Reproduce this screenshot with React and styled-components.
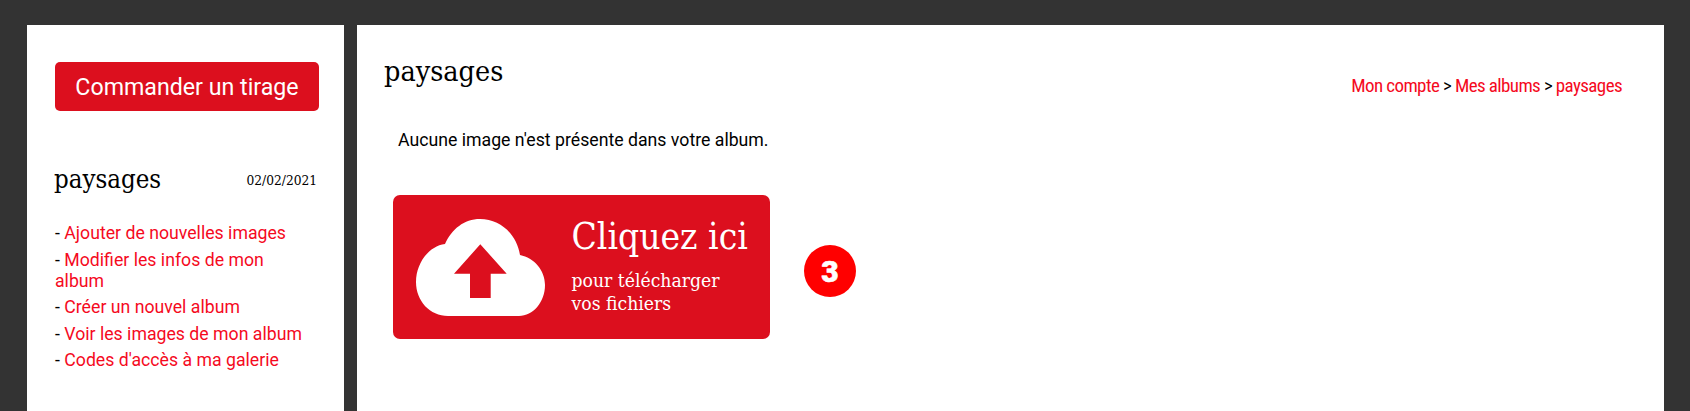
import React from 'react'
import styled, { createGlobalStyle } from 'styled-components'

const RED = '#dc0f1e'
const LINK = '#f50a1e'
const SLAB = '"DejaVu Serif Condensed", "DejaVu Serif", serif'

const Global = createGlobalStyle`
  html, body { margin: 0; height: 411px; overflow: hidden; background: #333; }
  body { font-family: Roboto, sans-serif; color: #000; }
`

const Page = styled.div`
  display: flex;
  gap: 13px;
  height: 411px;
  padding: 25px 26px 0 27px;
  box-sizing: border-box;
`

const Sidebar = styled.aside`
  width: 317px;
  flex: none;
  background: #fff;
  padding: 37px 25px 0 28px;
  box-sizing: border-box;
`

const Main = styled.main`
  flex: 1;
  background: #fff;
  padding: 31px 42px 0 27px;
`

const OrderButton = styled.a`
  display: flex;
  align-items: center;
  justify-content: center;
  height: 49px;
  background: ${RED};
  border-radius: 5px;
  color: #fff;
  font-size: 23.2px;
`

const AlbumHead = styled.div`
  display: flex;
  justify-content: space-between;
  align-items: center;
  margin-top: 51px;
  padding-right: 2px;
`

const AlbumTitle = styled.h2`
  margin: 0 0 0 -1px;
  font: 400 25.6px/34px ${SLAB};
`

const AlbumDate = styled.span`
  margin-top: 2px;
  font: 400 13.6px/20px ${SLAB};
`

const Menu = styled.ul`
  list-style: none;
  margin: 27px 8px 0 0;
  padding: 0;
  font-size: 17.7px;
  line-height: 21px;
`

const MenuItem = styled.li`
  margin-bottom: 5.5px;
  a { color: ${LINK}; }
`

const Head = styled.div`
  display: flex;
  justify-content: space-between;
`

const PageTitle = styled.h1`
  margin: 0;
  font: 400 28.5px/32px ${SLAB};
`

const Crumbs = styled.div`
  margin-top: 19px;
  font-size: 19px;
  line-height: 22px;
  font-stretch: 75%;
  letter-spacing: -0.6px;
  a { color: ${LINK}; }
`

const Notice = styled.p`
  margin: 31px 0 0 14px;
  font-size: 17.7px;
  line-height: 24px;
`

const UploadRow = styled.div`
  display: flex;
  align-items: center;
  gap: 34px;
  margin: 43px 0 0 9px;
`

const UploadCard = styled.a`
  display: flex;
  align-items: center;
  width: 377px;
  height: 144px;
  padding-left: 23px;
  box-sizing: border-box;
  background: ${RED};
  border-radius: 7px;
  color: #fff;
`

const UploadText = styled.div`
  margin-left: 26.5px;
  padding-bottom: 3px;
`

const UploadTitle = styled.div`
  font: 400 36.8px/42px ${SLAB};
`

const UploadSub = styled.div`
  margin-top: 11px;
  font: 400 19.2px/23px ${SLAB};
`

const StepBadge = styled.div`
  display: flex;
  align-items: center;
  justify-content: center;
  width: 52px;
  height: 52px;
  margin-top: 8px;
  border-radius: 50%;
  background: #f00;
  color: #fff;
  font-size: 30px;
  font-weight: 900;
  -webkit-text-stroke: 0.6px #fff;
`

const CloudIcon = () => (
  <svg width="129" height="97" viewBox="0 0 129 97" style={{ flex: 'none' }}>
    <path
      fill="#fff"
      d="M32 97C14 97 0 82 0 63C0 44 13 27 29 25C36 10 48 0 64 0C85 0 101 16 104 36C118 39 129 51 129 66C129 83 117 97 103 97Z"
    />
    <path fill={RED} d="M64.300 25.300L90.700 54.700H74.700V79H54V54.700H38Z" />
  </svg>
)

const links = [
  'Ajouter de nouvelles images',
  'Modifier les infos de mon album',
  'Créer un nouvel album',
  'Voir les images de mon album',
  "Codes d'accès à ma galerie",
]

export default function App() {
  return (
    <Page>
      <Global />
      <Sidebar>
        <OrderButton>Commander un tirage</OrderButton>
        <AlbumHead>
          <AlbumTitle>paysages</AlbumTitle>
          <AlbumDate>02/02/2021</AlbumDate>
        </AlbumHead>
        <Menu>
          {links.map((label) => (
            <MenuItem key={label}>- <a>{label}</a></MenuItem>
          ))}
        </Menu>
      </Sidebar>
      <Main>
        <Head>
          <PageTitle>paysages</PageTitle>
          <Crumbs>
            <a>Mon compte</a> &gt; <a>Mes albums</a> &gt; <a>paysages</a>
          </Crumbs>
        </Head>
        <Notice>Aucune image n'est présente dans votre album.</Notice>
        <UploadRow>
          <UploadCard>
            <CloudIcon />
            <UploadText>
              <UploadTitle>Cliquez ici</UploadTitle>
              <UploadSub>pour télécharger<br />vos fichiers</UploadSub>
            </UploadText>
          </UploadCard>
          <StepBadge>3</StepBadge>
        </UploadRow>
      </Main>
    </Page>
  )
}
